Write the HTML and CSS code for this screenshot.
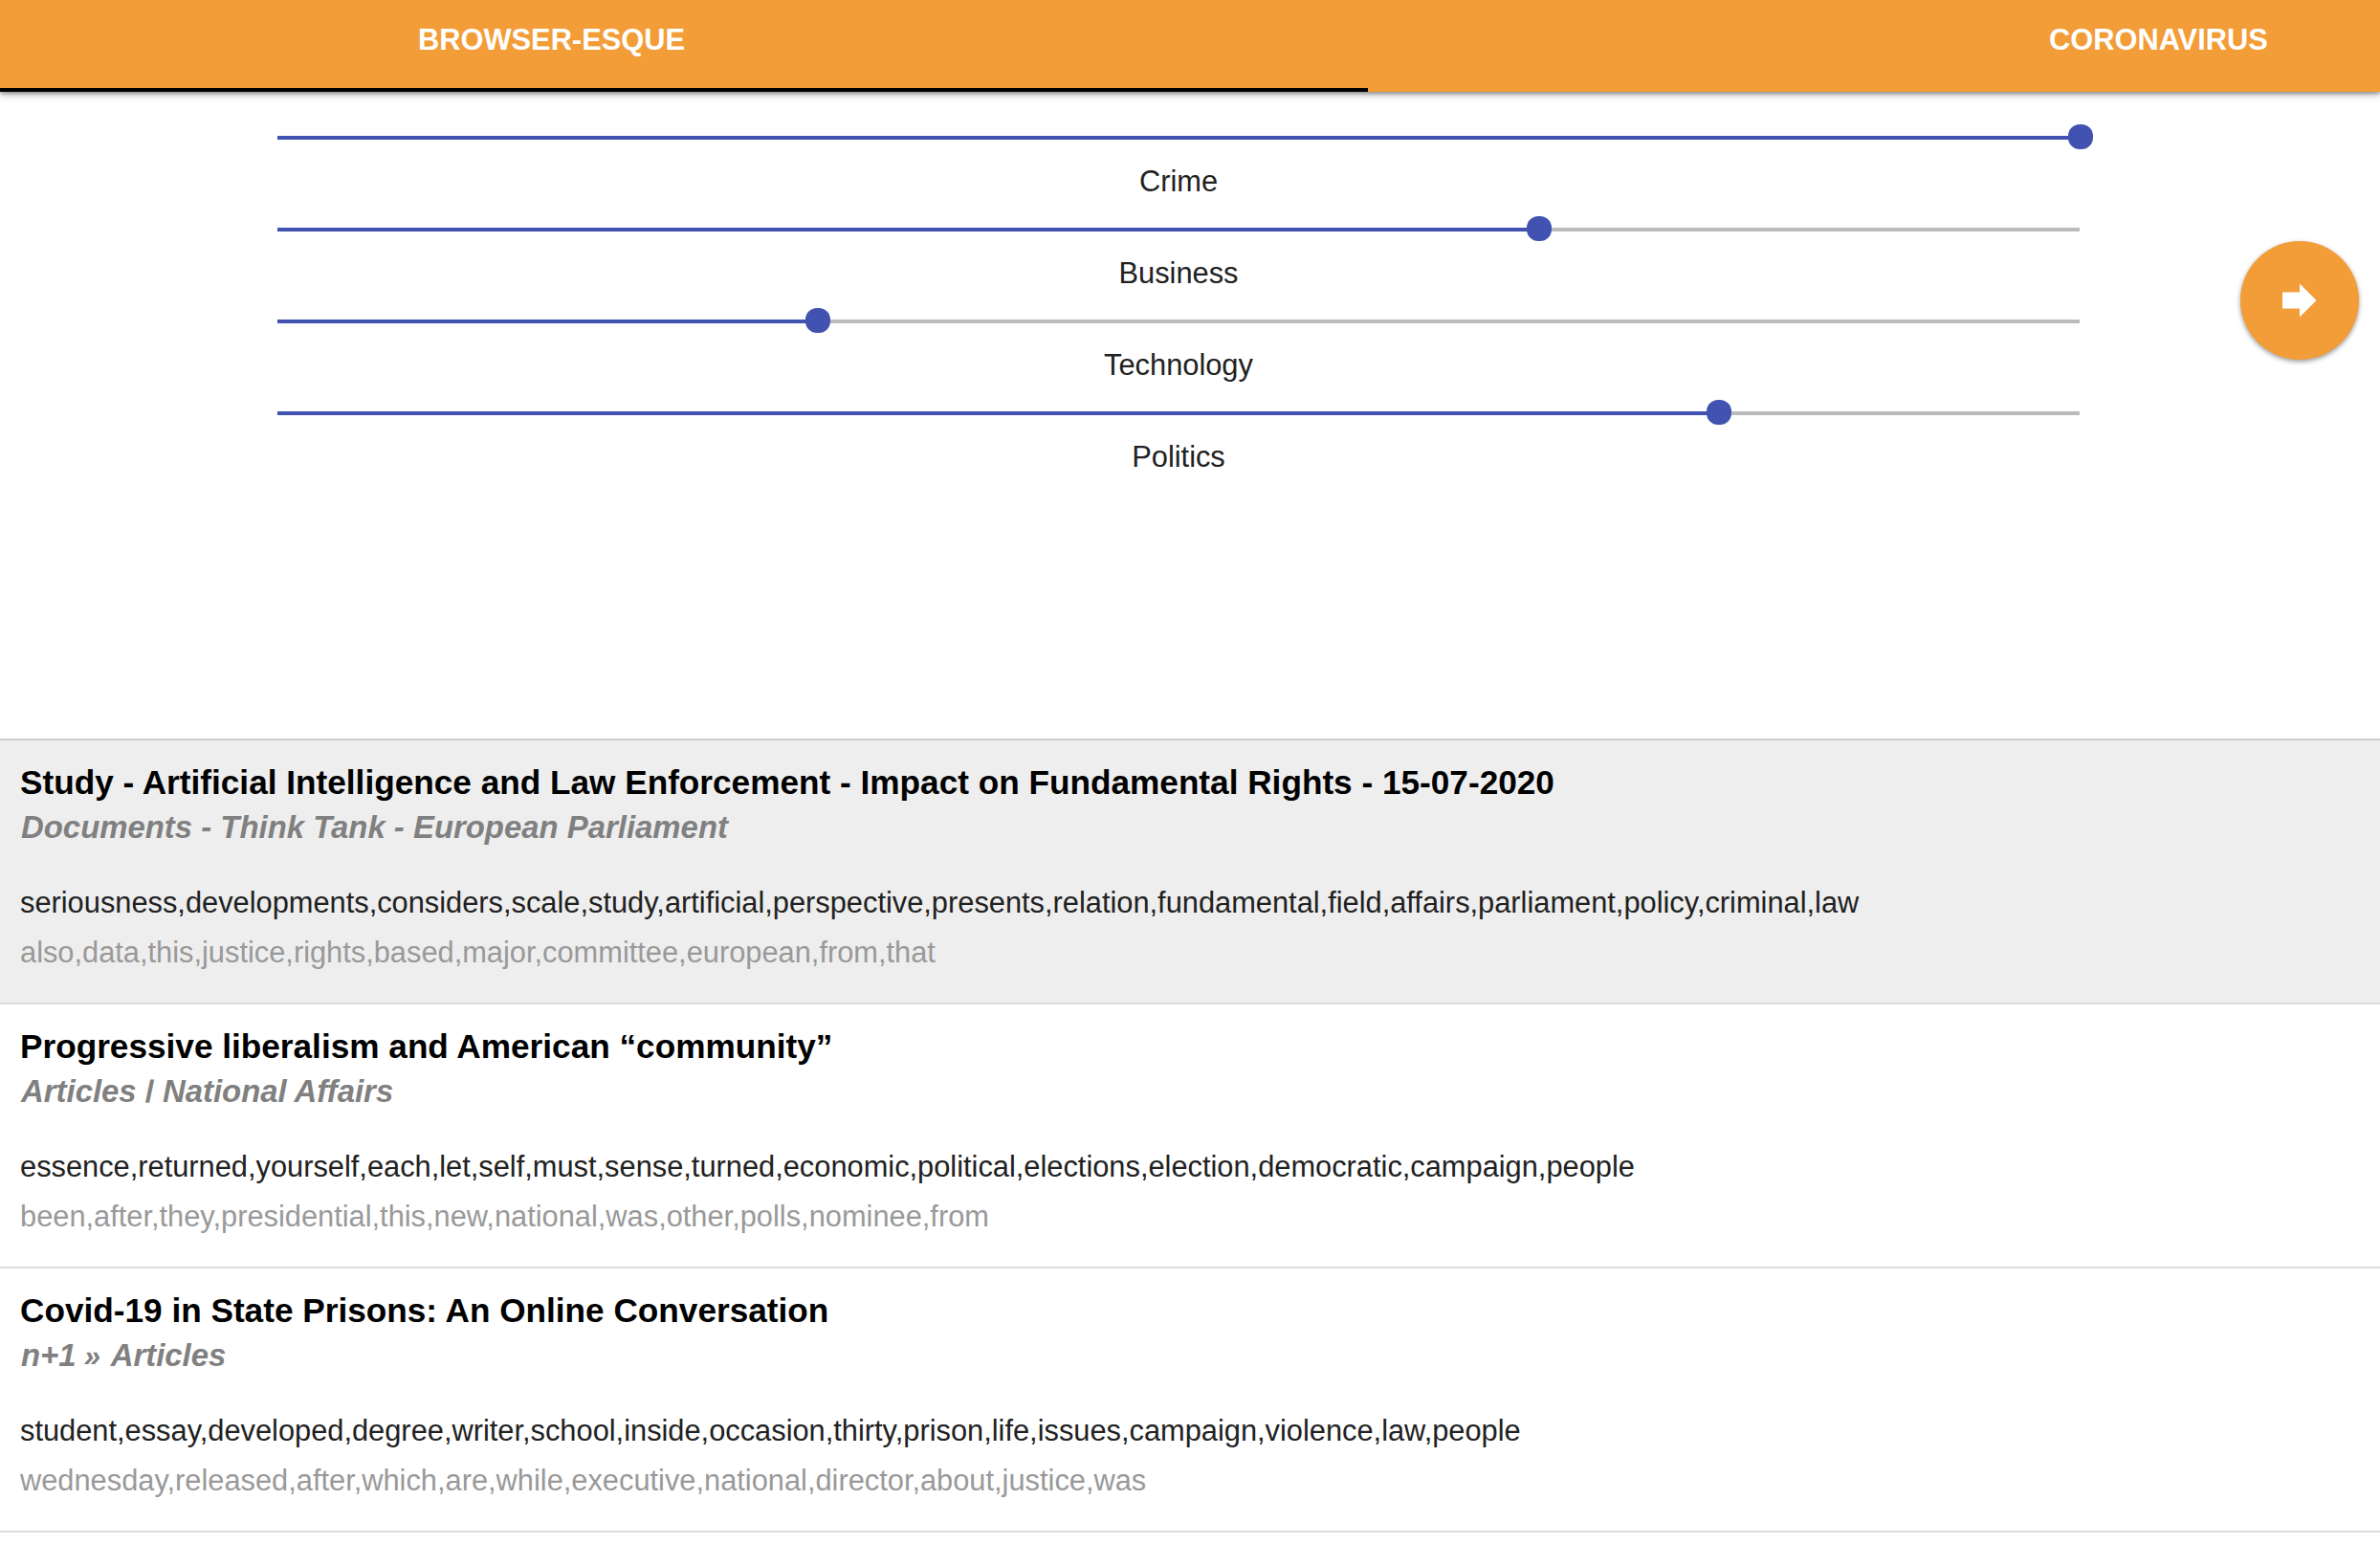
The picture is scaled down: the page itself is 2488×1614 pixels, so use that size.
FILE: index.html
```html
<!DOCTYPE html>
<html lang="en">
<head>
<meta charset="utf-8">
<title>Browser-esque</title>
<link rel="stylesheet" href="styles.css">
</head>
<body>
<nav class="tabs">
  <div class="tab tab-active">BROWSER-ESQUE</div>
  <div class="tab tab-next">CORONAVIRUS</div>
</nav>
<section class="controls">
  <div class="sliders">
    <div class="slider"><div class="track"><div class="fill" style="width:100%"></div></div><span>Crime</span></div>
    <div class="slider"><div class="track"><div class="fill" style="width:70%"></div></div><span>Business</span></div>
    <div class="slider"><div class="track"><div class="fill" style="width:30%"></div></div><span>Technology</span></div>
    <div class="slider"><div class="track"><div class="fill" style="width:80%"></div></div><span>Politics</span></div>
  </div>
  <button class="go" aria-label="Next"><svg width="36" height="36" viewBox="0 0 36 36"><path d="M0 9.500H18V.5L35.500 18L18 35.500V26.500H0Z" fill="#fff"/></svg></button>
</section>
<main class="list">
  <article class="item selected">
    <h2>Study - Artificial Intelligence and Law Enforcement - Impact on Fundamental Rights - 15-07-2020</h2>
    <h3>Documents - Think Tank - European Parliament</h3>
    <p class="words">seriousness,developments,considers,scale,study,artificial,perspective,presents,relation,fundamental,field,affairs,parliament,policy,criminal,law</p>
    <p class="muted">also,data,this,justice,rights,based,major,committee,european,from,that</p>
  </article>
  <article class="item">
    <h2>Progressive liberalism and American “community”</h2>
    <h3>Articles <span class="bar">|</span> National Affairs</h3>
    <p class="words">essence,returned,yourself,each,let,self,must,sense,turned,economic,political,elections,election,democratic,campaign,people</p>
    <p class="muted">been,after,they,presidential,this,new,national,was,other,polls,nominee,from</p>
  </article>
  <article class="item">
    <h2>Covid-19 in State Prisons: An Online Conversation</h2>
    <h3>n+1 <span class="guillemet">»</span> Articles</h3>
    <p class="words">student,essay,developed,degree,writer,school,inside,occasion,thirty,prison,life,issues,campaign,violence,law,people</p>
    <p class="muted">wednesday,released,after,which,are,while,executive,national,director,about,justice,was</p>
  </article>
</main>
</body>
</html>
```
FILE: styles.css
```css
* { box-sizing: border-box; }
body { margin: 0; height: 1614px; overflow: hidden; background: #fff; color: #212121; font-family: "Liberation Sans", Arial, sans-serif; font-size: 30.8px; }
.tabs { display: flex; height: 96px; background: #f39d38; box-shadow: 0 2px 4px rgba(0,0,0,.35), 0 3px 9px rgba(0,0,0,.2); }
.tab { display: flex; justify-content: center; height: 96px; padding-top: 25px; line-height: 34px; font-weight: 700; color: #fff; white-space: nowrap; }
.tab-active { width: 1430px; padding-right: 277px; border-bottom: 4px solid #000; }
.tab-next { padding-left: 712px; }
.controls { display: flex; height: 676px; padding: 32px 22px 0 290px; justify-content: space-between; }
.sliders { width: 1884px; padding-top: 14px; }
.slider { height: 96px; text-align: center; line-height: 36px; }
.track { height: 4px; margin-bottom: 26px; background: #bbb; }
.fill { height: 4px; background: #4152b0; display: flex; align-items: center; justify-content: flex-end; }
.fill::after { content: ""; flex: none; width: 26px; height: 26px; margin-right: -13px; margin-bottom: 2px; border-radius: 12px; background: #4152b0; }
.slider:first-child .fill::after { margin-right: -14px; }
.go { display: flex; align-items: center; justify-content: center; width: 124px; height: 124px; margin-top: 124px; padding: 0; border: 0; border-radius: 50%; background: #f39d38; box-shadow: 0 2px 5px rgba(0,0,0,.4); }
.item { height: 276px; padding: 23px 20px 0 21px; border-top: 2px solid #ddd; white-space: nowrap; }
.item:last-child { border-bottom: 2px solid #ddd; height: 278px; }
.selected { background: #eee; border-top-color: #ccc; }
h2, h3, p { margin: 0; }
h2 { font-size: 35.2px; line-height: 42px; color: #000; }
h3 { height: 44px; margin-top: 4px; padding-left: 1px; font-size: 32.9px; line-height: 44px; font-style: italic; color: #808080; }
.bar { display: inline-block; padding: 0 1px; font-size: 25px; line-height: 1; vertical-align: 5px; transform: skewX(-12deg); -webkit-text-stroke: .8px #808080; }
.guillemet { display: inline-block; width: 18px; margin: 0 2px 0 -1px; font-size: 31px; line-height: 1; }
.words { margin-top: 33px; line-height: 48px; }
.muted { margin-top: 4px; line-height: 48px; color: #999; }
```
